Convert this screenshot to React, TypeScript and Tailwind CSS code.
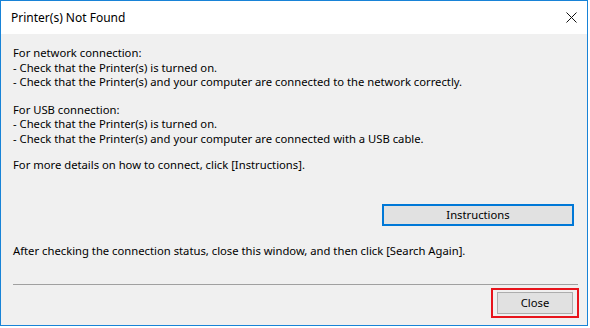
export default function App() {
  return (
    <div className="w-[590px] h-[328px] bg-white" style={{ fontFamily: '"Segoe UI", "Noto Sans", sans-serif' }}>
      <div className="w-[588px] h-[326px] border border-[#1883d7] flex flex-col text-[11.25px] text-black">
        {/* Title bar */}
        <div className="h-[33px] bg-white flex items-center justify-between shrink-0">
          <span className="pl-[10px] text-[12px] leading-none">Printer(s) Not Found</span>
          <div className="w-[30px] h-[33px] flex items-center justify-center mr-[1px]">
            <svg width="11" height="11" viewBox="0 0 11 11">
              <path d="M0.5 0.5 L10.5 10.5 M10.5 0.5 L0.5 10.5" stroke="#111" strokeWidth="1" />
            </svg>
          </div>
        </div>

        {/* Body */}
        <div className="flex-1 bg-[#f0f0f0] flex flex-col pl-[12px] pr-[12px] pt-[12px] leading-[14.5px]">
          <div>
            <p>For network connection:</p>
            <p>- Check that the Printer(s) is turned on.</p>
            <p>- Check that the Printer(s) and your computer are connected to the network correctly.</p>
          </div>
          <div className="mt-[13px]">
            <p>For USB connection:</p>
            <p>- Check that the Printer(s) is turned on.</p>
            <p>- Check that the Printer(s) and your computer are connected with a USB cable.</p>
          </div>
          <p className="mt-[12px]">For more details on how to connect, click [Instructions].</p>

          <div className="flex justify-end mt-[31px] pr-[1px]">
            <button className="w-[192px] h-[22px] bg-[#e1e1e1] border-2 border-[#0078d7] text-[11.25px] leading-none">
              Instructions
            </button>
          </div>

          <p className="mt-[18px]">After checking the connection status, close this window, and then click [Search Again].</p>

          <div className="mt-[26px] border-t border-[#a0a0a0] mr-[-3px]" />

          <div className="flex justify-end mt-[3px] mr-[-4px]">
            <div className="border-2 border-[#e8141c] px-[4px] py-[2px]">
              <button className="w-[76px] h-[22px] bg-[#e1e1e1] border border-[#adadad] text-[11.25px] leading-none">
                Close
              </button>
            </div>
          </div>
        </div>
      </div>
    </div>
  );
}
